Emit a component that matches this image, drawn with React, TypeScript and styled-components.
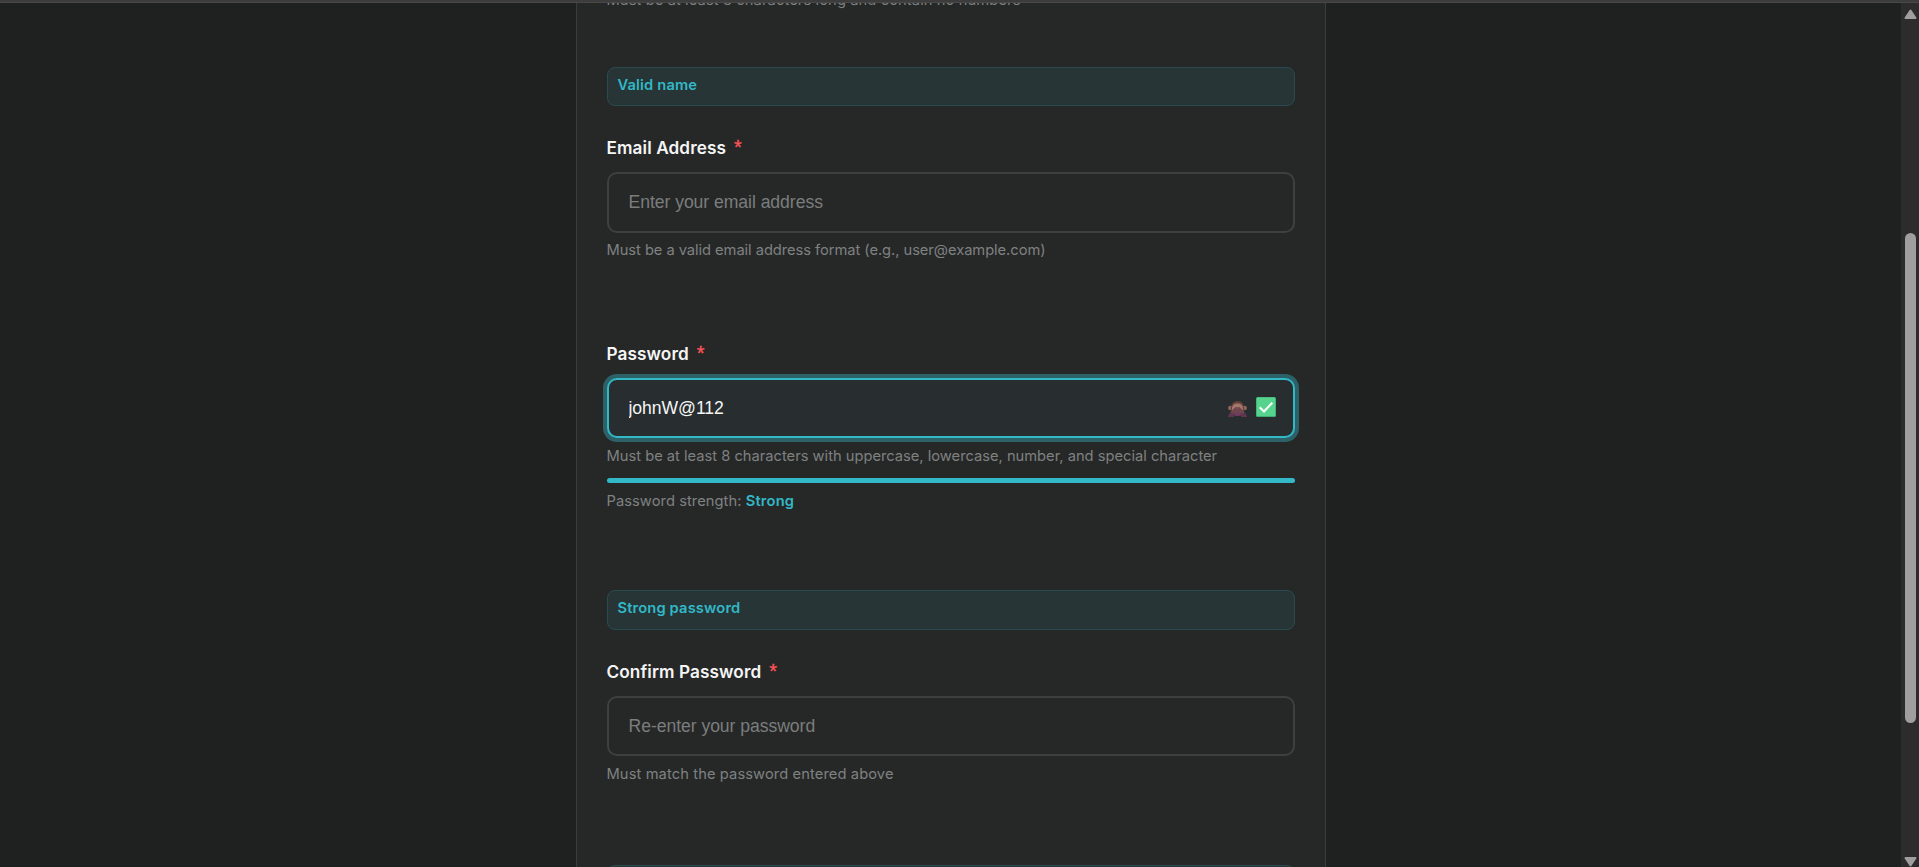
import React from "react";
import styled, { createGlobalStyle } from "styled-components";

const GlobalStyle = createGlobalStyle`
  * { box-sizing: border-box; }
  body { margin: 0; background: #1f2121; font-family: Inter, "Liberation Sans", Arial, sans-serif; overflow: hidden; }
`;

const Screen = styled.div`
  display: flex;
  flex-direction: column;
  height: 100vh;
  overflow: hidden;
`;

const TopEdge = styled.div`
  flex: none;
  height: 3px;
  background: #3c3c3c;
  border-bottom: 1px solid #484848;
`;

const Body = styled.div`
  flex: 1;
  min-height: 0;
  display: flex;
`;

const Page = styled.main`
  flex: 1;
  display: flex;
  justify-content: center;
  align-items: flex-start;
  overflow: hidden;
`;

const Card = styled.form`
  width: 750px;
  margin: -13px 0 0;
  padding: 0 30px 40px;
  background: #262828;
  border: 1px solid #3b3d3d;
  border-width: 0 1px;
  display: flex;
  flex-direction: column;
`;

const Field = styled.section<{ $gap: number }>`
  display: flex;
  flex-direction: column;
  margin-bottom: ${(p) => p.$gap}px;
`;

const Label = styled.label`
  display: flex;
  height: 20px;
  margin-bottom: 14px;
  font-size: 17.2px;
  font-weight: 600;
  line-height: 20px;
  letter-spacing: 0.1px;
  color: #f5f5f5;
`;

const Required = styled.span`
  margin-left: 8px;
  font-family: "Liberation Sans", Arial, sans-serif;
  font-size: 20px;
  line-height: 19px;
  font-weight: 400;
  letter-spacing: 0;
  color: #ff5459;
  -webkit-text-stroke: 0.3px #ff5459;
`;

const InputBox = styled.div<{ $height?: number; $focused?: boolean }>`
  display: flex;
  align-items: center;
  height: ${(p) => p.$height ?? 60}px;
  padding: 0 17px ${(p) => (p.$height ?? 60) - 60}px 20px;
  border: 2px solid ${(p) => (p.$focused ? "#32b8c6" : "#3e4040")};
  border-radius: 10px;
  background: ${(p) => (p.$focused ? "#282e30" : "#262828")};
  box-shadow: ${(p) => (p.$focused ? "0 0 0 4px #2b6167" : "none")};
`;

const Input = styled.input`
  flex: 1;
  min-width: 0;
  padding: 0;
  border: 0;
  outline: 0;
  background: transparent;
  font: 17.6px "Liberation Sans", Arial, sans-serif;
  letter-spacing: -0.05px;
  color: #f5f5f5;
  &::placeholder { color: #7b7d7d; opacity: 1; }
`;

const Icons = styled.div`
  display: flex;
  align-items: center;
  gap: 9px;
  margin-top: -2px;
`;

const Hint = styled.p<{ $top: number; $spacing?: number }>`
  margin: ${(p) => p.$top}px 0 0;
  font-size: 14.7px;
  line-height: 20px;
  letter-spacing: ${(p) => p.$spacing ?? 0}px;
  color: #7f8181;
  white-space: nowrap;
`;

const StrengthBar = styled.div`
  height: 5px;
  margin-top: 12px;
  border-radius: 3px;
  background: #32b8c6;
`;

const Strength = styled.strong`
  font-weight: 600;
  letter-spacing: 0.2px;
  color: #32b8c6;
`;

const Message = styled.div<{ $height: number }>`
  height: ${(p) => p.$height}px;
  flex: none;
  margin-bottom: 32px;
  padding: 7px 10px;
  border: 1px solid #294b50;
  border-radius: 8px;
  background: #273536;
  font-size: 14.7px;
  font-weight: 560;
  letter-spacing: 0.15px;
  line-height: 20px;
  color: #32b8c6;
`;

const Scrollbar = styled.aside`
  flex: none;
  width: 18px;
  display: flex;
  flex-direction: column;
  align-items: center;
  padding-top: 6px;
  padding-left: 1px;
  background: #2c2c2c;
`;

const Thumb = styled.div`
  width: 11px;
  height: 490px;
  margin: 214px 0 134px;
  border-radius: 6px;
  background: #9f9f9f;
`;

const Arrow = ({ down }: { down?: boolean }) => (
  <svg width="13" height="10" viewBox="0 0 13 10" style={{ flex: "none" }}>
    <path
      d={down ? "M1.5 1h10L6.5 8.5z" : "M1.5 9h10L6.5 1.5z"}
      fill="#9f9f9f"
      stroke="#9f9f9f"
      strokeWidth="2"
      strokeLinejoin="round"
    />
  </svg>
);

const MonkeyIcon = () => (
  <svg width="19" height="16" viewBox="0 0 19 16" style={{ marginTop: 4 }}>
    <circle cx="2.4" cy="7" r="2.3" fill="#93675e" />
    <circle cx="16.6" cy="7" r="2.3" fill="#93675e" />
    <path d="M2.8 9C2.500 3 5.500 0 9.500 0s7 3 6.700 9l-1.200 4H4z" fill="#634139" />
    <path d="M4 9c-.4-4.500 2-6.800 5.500-6.500C13 2.200 15.400 4.500 15 9l-2 2H6z" fill="#a4776b" />
    <path d="M5.500 8h8v5.800q-4 2.500-8 0z" fill="#743b62" />
    <path d="M.2 15.800C1 12.500 4 9.500 7.200 6.200L9.300 6v4.500L5.500 15.800z" fill="#6e474e" />
    <path d="M18.800 15.800C18 12.500 15 9.500 11.800 6.200L9.700 6v4.500l3.800 5.300z" fill="#6e474e" />
    <path d="M.2 15.800q.8-2.300 2.200-4L7 12.800l-1.500 3zM18.800 15.800q-.8-2.300-2.200-4l-4.600 1 1.500 3z" fill="#633353" />
  </svg>
);

const CheckIcon = () => (
  <svg width="20" height="20" viewBox="0 0 20 20">
    <rect width="20" height="20" rx="1.500" fill="#3fae71" />
    <rect x=".8" y=".6" width="18.400" height="18.400" rx="1" fill="#56d38d" />
    <path d="M3.700 10.300 8 14.500l8.300-8.700" fill="none" stroke="#fff" strokeWidth="2" />
  </svg>
);

export default function App() {
  return (
    <>
      <GlobalStyle />
      <Screen>
        <TopEdge />
        <Body>
          <Page>
            <Card>
              <Field $gap={57}>
                <Hint $top={0} $spacing={0.1}>
                  Must be at least 3 characters long and contain no numbers
                </Hint>
              </Field>
              <Message $height={39}>Valid name</Message>
              <Field $gap={84}>
                <Label htmlFor="email">
                  Email Address<Required>*</Required>
                </Label>
                <InputBox $height={61}>
                  <Input id="email" placeholder="Enter your email address" />
                </InputBox>
                <Hint $top={7} $spacing={-0.05}>
                  Must be a valid email address format (e.g., user@example.com)
                </Hint>
              </Field>
              <Field $gap={79}>
                <Label htmlFor="password">
                  Password<Required>*</Required>
                </Label>
                <InputBox $focused>
                  <Input id="password" defaultValue="johnW@112" spellCheck={false} />
                  <Icons>
                    <MonkeyIcon />
                    <CheckIcon />
                  </Icons>
                </InputBox>
                <Hint $top={8}>
                  Must be at least 8 characters with uppercase, lowercase, number, and special character
                </Hint>
                <StrengthBar />
                <Hint $top={8} $spacing={0.06}>
                  Password strength: <Strength>Strong</Strength>
                </Hint>
              </Field>
              <Message $height={40}>Strong password</Message>
              <Field $gap={81}>
                <Label htmlFor="confirm">
                  Confirm Password<Required>*</Required>
                </Label>
                <InputBox>
                  <Input id="confirm" placeholder="Re-enter your password" />
                </InputBox>
                <Hint $top={8} $spacing={0.1}>
                  Must match the password entered above
                </Hint>
              </Field>
              <Message $height={40} />
            </Card>
          </Page>
          <Scrollbar>
            <Arrow />
            <Thumb />
            <Arrow down />
          </Scrollbar>
        </Body>
      </Screen>
    </>
  );
}
